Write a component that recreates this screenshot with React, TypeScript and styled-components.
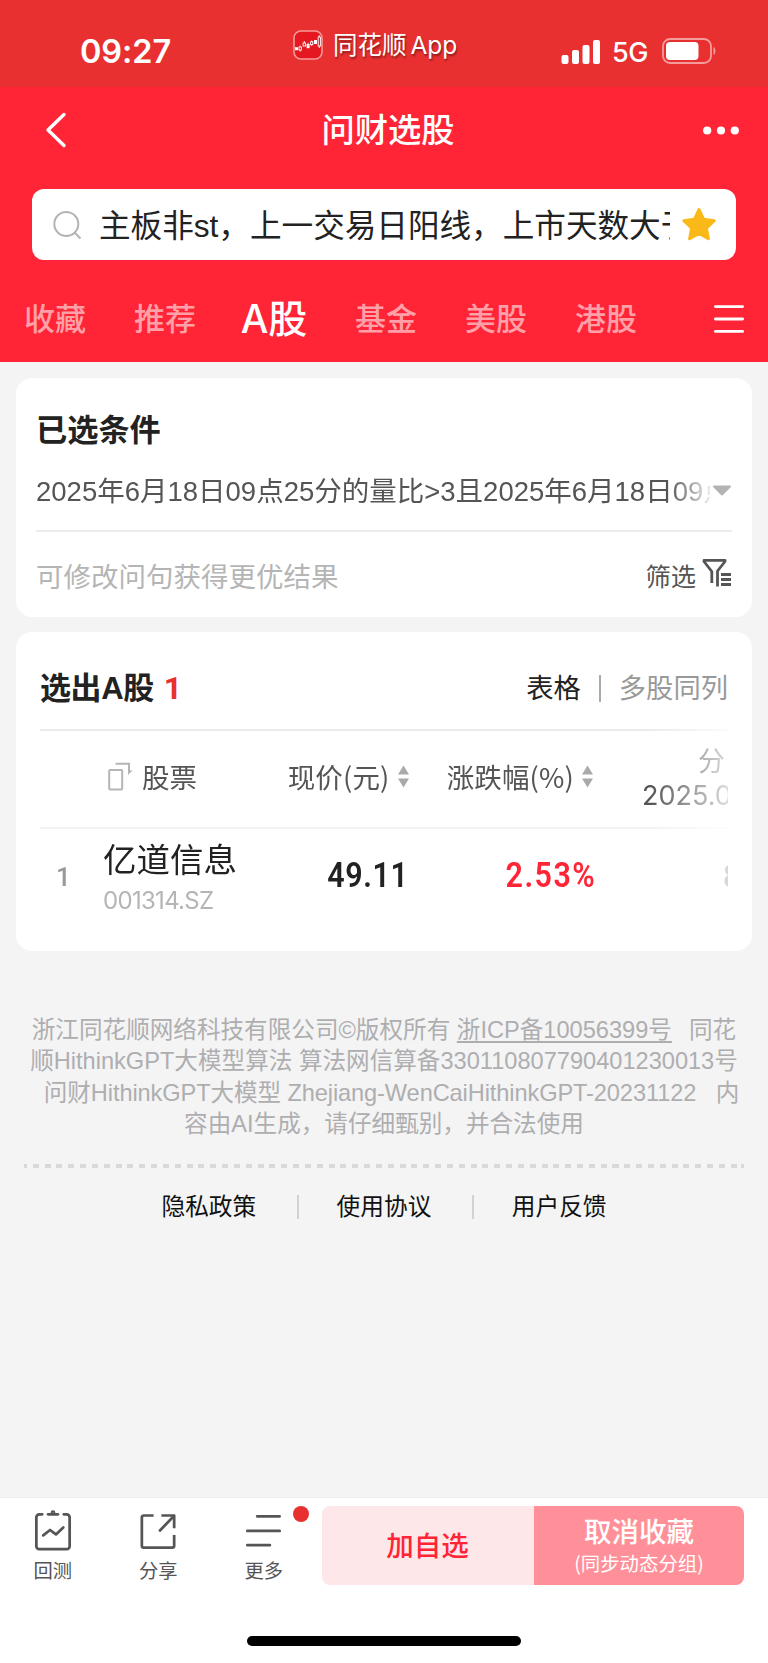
import React from "react";
import styled, { createGlobalStyle } from "styled-components";

const sans = `"Liberation Sans", "Noto Sans CJK SC", sans-serif`;
const ui = `Inter, "Noto Sans CJK SC", sans-serif`;

const GlobalStyle = createGlobalStyle`
  * { box-sizing: border-box; }
  body { margin: 0; background: #f4f4f4; font-family: ${sans}; }
`;

const Screen = styled.div`
  width: 768px;
  height: 1663px;
  display: flex;
  flex-direction: column;
  background: #f4f4f4;
  overflow: hidden;
  white-space: nowrap;
`;

/* ---------- status bar ---------- */
const StatusBar = styled.div`
  height: 87px;
  flex: none;
  background: #e83030;
  color: #fff;
  display: grid;
  grid-template-columns: 293px 268px 1fr;
  align-items: start;
`;
const Clock = styled.div`
  padding: 32px 0 0 80px;
  font: 600 32.5px/39px ${ui};
  letter-spacing: -0.1px;
`;
const AppTag = styled.div`
  display: flex;
  align-items: center;
  gap: 10px;
  padding-top: 30px;
  height: 60px;
`;
const AppName = styled.span`
  font: 400 24.5px/30px ${ui};
  text-shadow: 1px 2px 2px rgba(0, 0, 0, 0.4);
  word-spacing: -3px;
`;
const Signals = styled.div`
  display: flex;
  align-items: center;
  padding-top: 38px;
  height: 64px;
`;
const Network = styled.span`
  font: 500 27px/26px ${ui};
  margin: 3px 14px 0 12px;
  letter-spacing: -0.4px;
`;

/* ---------- red header ---------- */
const Header = styled.header`
  height: 275px;
  flex: none;
  background: #ff2436;
  color: #fff;
  display: flex;
  flex-direction: column;
`;
const NavBar = styled.div`
  height: 102px;
  padding: 0 28px 16px 45px;
  display: grid;
  grid-template-columns: 150px 1fr 150px;
  align-items: center;
`;
const NavTitle = styled.h1`
  margin: 2px 9px 0 0;
  text-align: center;
  font: 500 33.3px/40px ${sans};
`;
const NavEnd = styled.div`
  display: flex;
  justify-content: flex-end;
`;
const SearchBox = styled.div`
  margin: 0 32px;
  height: 71px;
  border-radius: 12px;
  background: #fff;
  display: flex;
  align-items: center;
  padding: 0 18px 0 21px;
`;
const Query = styled.div`
  flex: none;
  width: 571px;
  margin: 2px 11px 0 17px;
  overflow: hidden;
  color: #222;
  font: 400 31.6px/44px ${sans};
`;
const Tabs = styled.nav`
  height: 102px;
  padding: 15px 24px 0 24px;
  display: flex;
  align-items: center;
`;
const Tab = styled.span<{ $active?: boolean }>`
  width: ${(p) => (p.$active ? 66 : 62)}px;
  margin-right: 48px;
  margin-left: ${(p) => (p.$active ? -3 : 0)}px;
  font: 500 ${(p) => (p.$active ? 39 : 31)}px/44px ${ui};
  color: ${(p) => (p.$active ? "#fff" : "#ffa0a8")};
  display: flex;
  justify-content: center;
`;
const MenuSlot = styled.div`
  margin-left: auto;
  display: flex;
  padding-top: 1px;
`;

/* ---------- cards ---------- */
const Card = styled.section<{ $h: number; $top: number; $pad: number }>`
  flex: none;
  height: ${(p) => p.$h}px;
  margin: ${(p) => p.$top}px 16px 0;
  padding: 0 ${(p) => p.$pad}px;
  border-radius: 16px;
  background: #fff;
`;
const CardTitle = styled.h2`
  margin: 0;
  padding-top: 33px;
  font: 700 31.2px/39px ${sans};
  color: #222;
`;
const ConditionRow = styled.div`
  display: flex;
  align-items: center;
  padding-top: 3px;
  border-bottom: 2px solid #ebebeb;
  height: 82px;
`;
const Condition = styled.div`
  width: 675px;
  margin-right: 2px;
  overflow: hidden;
  color: #555;
  font: 400 27.5px/40px ${sans};
  mask-image: linear-gradient(90deg, #000 633px, transparent 680px);
`;
const HintRow = styled.div`
  height: 85px;
  display: flex;
  justify-content: space-between;
  align-items: center;
  padding-top: 7px;
  font: 400 27.5px/40px ${sans};
  color: #b5b5b5;
`;
const FilterButton = styled.div`
  display: flex;
  align-items: center;
  gap: 6px;
  color: #555;
  font-size: 25.3px;
  padding-bottom: 3px;
`;
const FilterMark = styled.span`
  display: flex;
  padding-bottom: 9px;
`;

const ResultHead = styled.div`
  height: 97px;
  display: flex;
  align-items: center;
  padding-top: 16px;
`;
const ResultTitle = styled.h2`
  margin: 0;
  font: 700 31px/44px ${sans};
  color: #222;
  letter-spacing: -0.4px;
`;
const Count = styled.span`
  margin: 0 0 2px 10px;
  color: #e93030;
  font: 700 32px/42px Roboto, sans-serif;
`;
const ViewSwitch = styled.div`
  margin-left: auto;
  display: flex;
  align-items: center;
  font: 400 27.3px/44px ${sans};
  color: #999;
`;
const ViewActive = styled.span`
  color: #222;
`;
const Bar = styled.i<{ $h: number; $color: string; $left: number; $right: number }>`
  width: 2px;
  height: ${(p) => p.$h}px;
  margin: 0 ${(p) => p.$right}px 0 ${(p) => p.$left}px;
  background: ${(p) => p.$color};
`;

const Table = styled.div`
  overflow: hidden;
  border-top: 2px solid #ebebeb;
  mask-image: linear-gradient(90deg, #000 610px, rgba(0, 0, 0, 0.2) 688px);
`;
const Row = styled.div<{ $h: number; $line?: boolean }>`
  height: ${(p) => p.$h}px;
  display: grid;
  grid-template-columns: 63px 180px 126.5px 184.5px 134px;
  align-items: center;
  border-bottom: ${(p) => (p.$line ? "2px solid #f3f3f3" : "none")};
  color: #555;
  font: 400 27.5px/36px ${sans};
`;
const HeadStock = styled.div`
  display: flex;
  align-items: center;
  gap: 9px;
  padding-left: 5px;

  svg {
    margin-bottom: 6px;
  }
`;
const HeadCell = styled.div`
  display: flex;
  align-items: center;
  justify-content: flex-end;
  gap: 8px;
  padding-bottom: 6px;
  font-family: "Noto Sans CJK SC", sans-serif;
  letter-spacing: 0.15px;
`;
const DateHead = styled.div`
  padding-left: 48px;
  overflow: hidden;
  font: 400 27px/34px ${ui};
`;
const DateLabel = styled.div`
  padding-left: 56px;
`;
const Index = styled.div`
  padding: 0 0 3px 16px;
  color: #999;
  font: 500 26px/36px Roboto, sans-serif;
`;
const StockName = styled.div`
  font: 400 33.5px/40px ${sans};
  color: #222;
`;
const StockCode = styled.div`
  padding-top: 5px;
  font: 400 24px/30px ${ui};
  letter-spacing: -0.7px;
  color: #b5b5b5;
`;
const Figure = styled.div<{ $color: string; $inset?: number; $track?: number }>`
  padding-right: ${(p) => p.$inset ?? 0}px;
  padding-bottom: 4px;
  text-align: right;
  color: ${(p) => p.$color};
  letter-spacing: ${(p) => p.$track ?? 0}px;
  font: 600 35px/44px Roboto, sans-serif;
`;
const Narrow = styled.span`
  display: inline-block;
  transform: scaleX(0.87);
  transform-origin: right center;
`;
const NextFigure = styled.div`
  padding: 0 0 3px 129px;
  overflow: hidden;
  color: #444;
  font: 700 33px/44px Roboto, sans-serif;
`;

/* ---------- legal ---------- */
const Legal = styled.div`
  margin-top: 64px;
  display: flex;
  flex-direction: column;
  align-items: center;
  color: #aeaeb0;
  font: 400 23.6px/31.4px ${sans};
  white-space: pre;
`;
const LegalLine = styled.div<{ $shift: number; $track?: number }>`
  padding-left: ${(p) => p.$shift}px;
  letter-spacing: ${(p) => p.$track ?? 0}px;
`;
const Icp = styled.span`
  margin-right: 4px;
  text-decoration: underline;
  text-decoration-thickness: 2px;
  text-underline-offset: 3px;
`;
const Dashes = styled.div`
  flex: none;
  height: 4px;
  margin: 23px 24px 0;
  background: repeating-linear-gradient(90deg, #d9d9d9 0 6px, transparent 6px 11.83px) -3px 0;
`;
const Links = styled.div`
  display: flex;
  justify-content: center;
  align-items: center;
  margin-top: 21px;
  color: #111;
  font: 400 23.7px/36px ${sans};
`;

/* ---------- bottom bar ---------- */
const BottomBar = styled.footer`
  margin-top: auto;
  flex: none;
  height: 166px;
  background: #fff;
  border-top: 1px solid #eee;
  display: flex;
  flex-direction: column;
`;
const Actions = styled.div`
  display: flex;
  padding: 8px 24px 0 0;
`;
const Tool = styled.div`
  position: relative;
  width: 105.5px;
  display: flex;
  flex-direction: column;
  align-items: center;
  color: #555;
  font: 400 19.3px/26px ${sans};
  gap: 6px;
`;
const Dot = styled.i`
  position: absolute;
  left: 82px;
  top: 0;
  width: 16px;
  height: 16px;
  border-radius: 50%;
  background: #e93030;
`;
const ToolGroup = styled.div`
  display: flex;
  width: 322px;
  height: 79px;
  flex: none;
`;
const ButtonPair = styled.div`
  flex: 1;
  height: 79px;
  display: grid;
  grid-template-columns: 212px 1fr;
  border-radius: 8px;
  overflow: hidden;
`;
const AddButton = styled.div`
  display: flex;
  align-items: center;
  justify-content: center;
  background: #fee7e9;
  color: #ff2436;
  padding: 2px 1px 0 0;
  font: 500 27.5px/36px ${sans};
`;
const CancelButton = styled.div`
  display: flex;
  flex-direction: column;
  align-items: center;
  background: #ff9099;
  color: #fff;
  padding-top: 9px;
  font: 500 27.5px/36px ${sans};
`;
const CancelNote = styled.span`
  margin-top: -1px;
  font: 400 19.4px/26px "Noto Sans CJK SC", sans-serif;
`;
const HomeIndicator = styled.div`
  width: 274px;
  height: 10px;
  border-radius: 5px;
  background: #000;
  margin: 51px auto 0;
`;

const Sort = () => (
  <svg width="12" height="23" viewBox="0 0 12 23" fill="#aaa">
    <path d="M5.5 0.5 11 9.5H0ZM0 13.500h11L5.500 22.500Z" />
  </svg>
);

const AppLogo = () => (
  <svg width="30" height="30" viewBox="0 0 30 30">
    <rect x="1" y="1" width="28" height="28" rx="7" fill="#e5181f" stroke="#f59a9a" strokeWidth="1.6" />
    <g fill="#fff">
      <rect x="2" y="17.2" width="3" height="3" />
      <rect x="13.6" y="14" width="3" height="4.2" />
      <rect x="21" y="10" width="3" height="4" />
    </g>
    <g fill="none" stroke="#fff" strokeWidth="0.9">
      <path d="M7.2 15.6v1.2M7.2 20v1.6M11.3 11v2M18.7 10.5v1.5M18.7 14.5v1.5M15.1 12.8v1.4" />
      <rect x="6" y="17" width="2.4" height="3" />
      <rect x="10.1" y="13" width="2.4" height="3" />
      <rect x="17.6" y="11.8" width="2.2" height="2.8" />
      <rect x="25.2" y="7" width="2.2" height="9" />
      <path d="M26.3 5.2V7M26.3 16v2" />
    </g>
  </svg>
);

export default function App() {
  return (
    <Screen>
      <GlobalStyle />
      <StatusBar>
        <Clock>09:27</Clock>
        <AppTag>
          <AppLogo />
          <AppName>同花顺 App</AppName>
        </AppTag>
        <Signals>
          <svg width="39" height="25" viewBox="0 0 39 25" fill="#fff">
            <rect x="0.5" y="16" width="7" height="9" rx="2" />
            <rect x="11" y="11" width="7" height="14" rx="2" />
            <rect x="21.5" y="6" width="7" height="19" rx="2" />
            <rect x="32" y="1" width="7" height="24" rx="2" />
          </svg>
          <Network>5G</Network>
          <svg width="55" height="26" viewBox="0 0 55 26">
            <rect x="1" y="1" width="48" height="24" rx="7" fill="none" stroke="#f49b9b" strokeWidth="1.8" />
            <rect x="4" y="4" width="32.5" height="18" rx="4" fill="#fff" />
            <path d="M51.500 9c2.600 1 2.600 7 0 8Z" fill="#f49b9b" />
          </svg>
        </Signals>
      </StatusBar>

      <Header>
        <NavBar>
          <svg width="22" height="36" viewBox="0 0 22 36">
            <path d="M19 2.5 3 18l16 15.5" fill="none" stroke="#fff" strokeWidth="3.4" strokeLinecap="round" strokeLinejoin="round" />
          </svg>
          <NavTitle>问财选股</NavTitle>
          <NavEnd>
            <svg width="37" height="9" viewBox="0 0 37 9" fill="#fff">
              <circle cx="4.2" cy="4.5" r="4.1" />
              <circle cx="18" cy="4.5" r="4.1" />
              <circle cx="31.800" cy="4.5" r="4.1" />
            </svg>
          </NavEnd>
        </NavBar>
        <SearchBox>
          <svg width="29" height="30" viewBox="0 0 29 30" fill="none" stroke="#b3b3b3" strokeWidth="2">
            <circle cx="13.3" cy="14" r="12" />
            <path d="m22 23 5.5 5.5" />
          </svg>
          <Query>主板非st，上一交易日阳线，上市天数大于</Query>
          <svg width="36" height="35" viewBox="0 0 36 35">
            <path
              d="m18 2.5 4.6 9.8 10.6 1.4-7.8 7.4 2 10.6-9.4-5.2-9.4 5.2 2-10.6-7.8-7.4 10.6-1.4Z"
              fill="#fbb919"
              stroke="#fbb919"
              strokeWidth="3"
              strokeLinejoin="round"
            />
          </svg>
        </SearchBox>
        <Tabs>
          <Tab>收藏</Tab>
          <Tab>推荐</Tab>
          <Tab $active>A股</Tab>
          <Tab>基金</Tab>
          <Tab>美股</Tab>
          <Tab>港股</Tab>
          <MenuSlot>
            <svg width="30" height="28" viewBox="0 0 30 28" stroke="#fff" strokeWidth="2.8" strokeLinecap="round">
              <path d="M1.4 1.6h27.2M1.4 14h27.2M1.4 26.4h27.2" />
            </svg>
          </MenuSlot>
        </Tabs>
      </Header>

      <Card $h={239} $top={16} $pad={20}>
        <CardTitle>已选条件</CardTitle>
        <ConditionRow>
          <Condition>2025年6月18日09点25分的量比&gt;3且2025年6月18日09点</Condition>
          <svg width="20" height="13" viewBox="0 0 20 13">
            <path d="M2 1.500h16L10 9.500Z" fill="#b3b3b3" stroke="#b3b3b3" strokeWidth="2" strokeLinejoin="round" />
          </svg>
        </ConditionRow>
        <HintRow>
          可修改问句获得更优结果
          <FilterButton>
            筛选
            <FilterMark>
              <svg width="30" height="29" viewBox="0 0 30 29" fill="none" stroke="#555" strokeWidth="2.8">
                <path d="M9.800 25V13.500L2 3.500V2.300h21v1.200L15.500 13v15.500" strokeLinejoin="round" />
                <path d="M19 16.500H29M19 21.500H29M19 26.500H29" />
              </svg>
            </FilterMark>
          </FilterButton>
        </HintRow>
      </Card>

      <Card $h={319} $top={15} $pad={24}>
        <ResultHead>
          <ResultTitle>选出A股</ResultTitle>
          <Count>1</Count>
          <ViewSwitch>
            <ViewActive>表格</ViewActive>
            <Bar $h={27} $color="#aaa" $left={18} $right={18} />
            <span>多股同列</span>
          </ViewSwitch>
        </ResultHead>
        <Table>
          <Row $h={98} $line>
            <span />
            <HeadStock>
              <svg width="25" height="29" viewBox="0 0 25 29" fill="none" stroke="#b5b5b5" strokeWidth="2">
                <rect x="1.200" y="8" width="13" height="19.500" rx="1" />
                <path d="M7.500 1.800H21V11" />
                <path d="M20 8v5l4.500-4.500Z" fill="#b5b5b5" stroke="none" />
              </svg>
              股票
            </HeadStock>
            <HeadCell>
              现价(元)
              <Sort />
            </HeadCell>
            <HeadCell>
              涨跌幅(%)
              <Sort />
            </HeadCell>
            <DateHead>
              <DateLabel>分</DateLabel>
              2025.0
            </DateHead>
          </Row>
          <Row $h={98}>
            <Index>1</Index>
            <div>
              <StockName>亿道信息</StockName>
              <StockCode>001314.SZ</StockCode>
            </div>
            <Figure $color="#222" $inset={1} $track={0.7}>
              <Narrow>49.11</Narrow>
            </Figure>
            <Figure $color="#ff2436" $inset={-1} $track={1.7}>
              <Narrow style={{ marginRight: -2 }}>2.53%</Narrow>
            </Figure>
            <NextFigure>8</NextFigure>
          </Row>
        </Table>
      </Card>

      <Legal>
        <LegalLine $shift={0}>
          浙江同花顺网络科技有限公司©版权所有 <Icp>浙ICP备10056399号</Icp>{"  "}同花
        </LegalLine>
        <LegalLine $shift={0}>顺HithinkGPT大模型算法 算法网信算备330110807790401230013号</LegalLine>
        <LegalLine $shift={15} $track={-0.1}>
          问财HithinkGPT大模型 Zhejiang-WenCaiHithinkGPT-20231122{"  "} 内
        </LegalLine>
        <LegalLine $shift={0}>容由AI生成，请仔细甄别，并合法使用</LegalLine>
      </Legal>
      <Dashes />
      <Links>
        <span>隐私政策</span>
        <Bar $h={24} $color="#d2d2d2" $left={40.7} $right={37.7} />
        <span>使用协议</span>
        <Bar $h={24} $color="#d2d2d2" $left={40.7} $right={37.7} />
        <span>用户反馈</span>
      </Links>

      <BottomBar>
        <Actions>
          <ToolGroup>
            <Tool>
              <svg width="40" height="48" viewBox="0 0 40 48" fill="none" stroke="#555" strokeWidth="2.800" strokeLinecap="round" strokeLinejoin="round">
                <path d="M9 8.500H6a3 3 0 0 0-3 3V41a3 3 0 0 0 3 3h28a3 3 0 0 0 3-3V11.500a3 3 0 0 0-3-3h-3" />
                <path d="M15 8.500h10" />
                <circle cx="20" cy="6.800" r="1" />
                <path d="m10 30 7-5.500 6 4.500 7.500-7" />
              </svg>
              回测
            </Tool>
            <Tool>
              <svg width="40" height="48" viewBox="0 0 40 48" fill="none" stroke="#555" strokeWidth="2.800" strokeLinejoin="round">
                <path d="M15.500 9.700H5.500a2 2 0 0 0-2 2V40.500a2 2 0 0 0 2 2h29a2 2 0 0 0 2-2V29.500" />
                <path d="M23.500 9.700h13v13" />
                <path d="M36 10.500 22 25" strokeLinecap="round" />
              </svg>
              分享
            </Tool>
            <Tool>
              <svg width="40" height="48" viewBox="0 0 40 48" fill="none" stroke="#555" strokeWidth="2.800" strokeLinecap="round">
                <path d="M13 10.500h23M3 25.500h33M3 40h23" />
              </svg>
              更多
              <Dot />
            </Tool>
          </ToolGroup>
          <ButtonPair>
            <AddButton>加自选</AddButton>
            <CancelButton>
              取消收藏
              <CancelNote>(同步动态分组)</CancelNote>
            </CancelButton>
          </ButtonPair>
        </Actions>
        <HomeIndicator />
      </BottomBar>
    </Screen>
  );
}
